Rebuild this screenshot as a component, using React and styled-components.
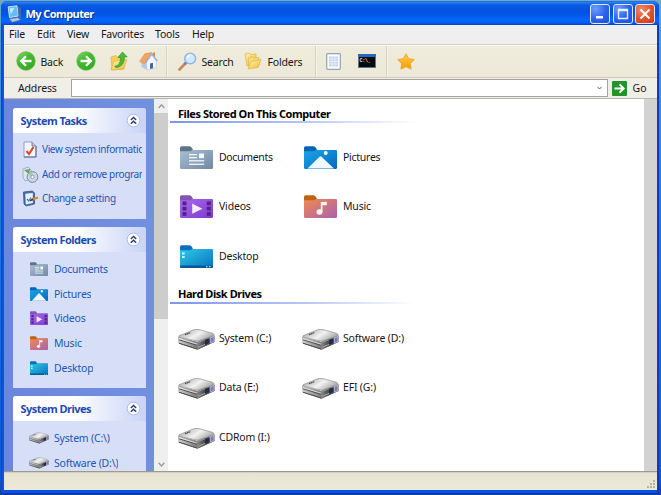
import React from 'react';
import styled, { createGlobalStyle } from 'styled-components';

const Global = createGlobalStyle`
  * { box-sizing: border-box; }
  html, body { margin: 0; height: 100%; overflow: hidden; }
  body { font-family: "Noto Sans", "Open Sans", sans-serif; font-size: 10.5px; color: #161616; }
  svg { display: block; flex: none; }
`;

const Desktop = styled.div`
  width: 661px;
  height: 495px;
  padding: 1px 1px 0;
  background: linear-gradient(#6fa9c4 0, #4b9bd3 40px, #1f7fd8 200px, #0a5bd0 480px, #1b3f9a);
  overflow: hidden;
`;
const Window = styled.div`
  width: 658px;
  height: 493px;
  padding: 0 2px 3px 3px;
  display: flex;
  flex-direction: column;
  border-radius: 6px 6px 0 0;
  background: linear-gradient(90deg, #0a3fcf 0, #0c56ec 2px, #0a50e6 3px, #0a50e6 655px, #0b45d6 656px, #0634b4);
  border-bottom: 1px solid #0434b4;
`;
const TitleBar = styled.div`
  height: 24px;
  flex: none;
  margin: 0 -2px 0 -3px;
  padding: 1px 4px 0 6px;
  display: flex;
  align-items: center;
  border-radius: 6px 6px 0 0;
  background: linear-gradient(#1b62d0 0, #2d82f4 1px, #0c5be2 4px, #0353e0 9px, #0456e6 14px, #0565fb 18px, #0464fa 21px, #0343c4 24px);
`;
const Title = styled.div`
  flex: 1;
  margin-left: 3.5px;
  color: #fff;
  font-weight: 700;
  font-size: 11px;
  letter-spacing: -0.58px;
  text-shadow: 1px 1px 1px #0b2f86;
`;
const Caption = styled.button`
  width: 20px;
  height: 20px;
  margin-left: 2.4px;
  padding: 0;
  display: grid;
  place-items: center;
  border: 1px solid #dfe9fd;
  border-radius: 3px;
  background: ${p => p.$close
    ? 'radial-gradient(circle at 30% 25%, #f08a65, #e2502c 55%, #c83a14)'
    : 'radial-gradient(circle at 25% 20%, #6e9cf8, #2c62ea 55%, #1d50dc)'};
`;
const MenuBar = styled.div`
  height: 19px;
  flex: none;
  display: flex;
  align-items: center;
  padding: 0 0 1px 5px;
  background: #efefef;
`;
const MenuItem = styled.div`
  width: ${p => p.$w}px;
  letter-spacing: -0.2px;
  white-space: nowrap;
`;
const ToolBar = styled.div`
  height: 34px;
  flex: none;
  display: flex;
  align-items: center;
  padding-left: 11.5px;
  border-top: 1px solid #d2d0c4;
  border-bottom: 1px solid #cfccbc;
  box-shadow: inset 0 1px #fbfaf4;
  background: linear-gradient(#efecdd, #ece9d8);
`;
const Tool = styled.div`
  width: ${p => p.$w}px;
  flex: none;
  display: flex;
  align-items: center;
  gap: ${p => p.$gap || 5}px;
  letter-spacing: -0.2px;
  white-space: nowrap;
`;
const Label = styled.span`
  padding-top: 1px;
`;
const Divider = styled.div`
  width: 2px;
  height: 31px;
  margin-right: ${p => p.$after}px;
  background: linear-gradient(90deg, #d6d3c4 50%, #f5f3e8 50%);
`;
const AddressBar = styled.div`
  height: 20px;
  flex: none;
  display: flex;
  align-items: center;
  padding-left: 14px;
  background: #efeee9;
`;
const AddressLabel = styled.div`
  width: 53px;
  padding-bottom: 1px;
  letter-spacing: -0.15px;
`;
const AddressInput = styled.div`
  width: 537px;
  height: 18px;
  padding-right: 5px;
  display: flex;
  align-items: center;
  justify-content: flex-end;
  border: 1px solid #a3a3a0;
  background: #fff;
`;
const GoButton = styled.div`
  display: flex;
  align-items: center;
  gap: 5.5px;
  margin-left: 4px;
`;
const Content = styled.div`
  flex: 1;
  min-height: 0;
  display: flex;
  border-top: 1px solid #b6b5b0;
  background: #fff;
`;
const Sidebar = styled.div`
  width: 150px;
  flex: none;
  overflow: hidden;
  padding: 9px 8.5px 0 8.5px;
  background: linear-gradient(90deg, #6b86dc, #7290e0);
`;
const Panel = styled.section`
  height: ${p => p.$h}px;
  margin-bottom: 8px;
  border-radius: 3px 3px 0 0;
  background: #d6dff7;
  overflow: hidden;
`;
const PanelHead = styled.div`
  height: 25px;
  padding: 0 5px 0 8px;
  display: flex;
  align-items: center;
  justify-content: space-between;
  background: linear-gradient(90deg, #fff 45%, #c8d4f7);
  color: #1b4bb0;
  font-size: 11px;
  font-weight: 700;
  letter-spacing: -0.54px;
  white-space: nowrap;
`;
const PanelList = styled.div`
  padding: ${p => p.$top}px 4px 0 ${p => p.$indent}px;
`;
const PanelRow = styled.div`
  height: 24.75px;
  display: flex;
  align-items: center;
  color: #2355b5;
`;
const IconCell = styled.div`
  width: ${p => p.$w}px;
  padding: ${p => p.$drop || 0}px 0 0 ${p => p.$pad || 0}px;
  flex: none;
`;
const PanelText = styled.div`
  overflow: hidden;
  white-space: nowrap;
  letter-spacing: ${p => p.$ls || -0.2}px;
`;
const TaskText = styled(PanelText)`
  font-size: 10px;
  letter-spacing: -0.36px;
  padding-bottom: 1px;
`;
const Scroll = styled.div`
  width: 14px;
  flex: none;
  display: flex;
  flex-direction: column;
  align-items: center;
  background: #efefef;
`;
const ScrollArrow = styled.div`
  height: 14px;
  display: grid;
  place-items: center;
`;
const Thumb = styled.div`
  width: 100%;
  height: 206px;
  margin-bottom: auto;
  background: #cdcdcd;
`;
const Main = styled.main`
  flex: 1;
  min-width: 0;
  padding-left: 2px;
`;
const Heading = styled.h2`
  height: ${p => p.$h}px;
  width: 246px;
  margin: 0;
  padding: 0 0 ${p => p.$pb}px 8px;
  display: flex;
  align-items: flex-end;
  line-height: 15px;
  font-size: 11px;
  letter-spacing: -0.44px;
  color: #000;
  border-bottom: 2px solid;
  border-image: linear-gradient(90deg, #7b95ee, #b9c6f6 55%, #fff) 1;
`;
const Grid = styled.div`
  display: grid;
  grid-template-columns: 124px 124px;
  grid-auto-rows: 49.5px;
  padding: ${p => p.$top}px 0 0 8px;
`;
const Item = styled.div`
  display: flex;
  align-items: center;
  white-space: nowrap;
  letter-spacing: ${p => p.$ls || -0.18}px;
`;
const Gutter = styled.div`
  width: 13px;
  flex: none;
  background: #d2d2d2;
`;
const StatusBar = styled.div`
  height: 19px;
  flex: none;
  display: flex;
  justify-content: flex-end;
  align-items: flex-end;
  padding: 0 1px 1px 0;
  border-top: 1px solid #9c9a8c;
  box-shadow: inset 0 1px #d5d2c2;
  background: linear-gradient(#e6e3d2, #ece9d8);
`;

const Defs = () => (
  <svg width="0" height="0">
    <defs>
      <linearGradient id="g-doc" x2="1" y2="1"><stop stopColor="#a9bfd4" /><stop offset="1" stopColor="#7088a3" /></linearGradient>
      <linearGradient id="g-pic" x2="1" y2="1"><stop stopColor="#19a7e8" /><stop offset="1" stopColor="#0667bd" /></linearGradient>
      <linearGradient id="g-vid" x2="1" y2="1"><stop stopColor="#a968ec" /><stop offset="1" stopColor="#7d3bd0" /></linearGradient>
      <linearGradient id="g-mus" x2="1" y2="1"><stop stopColor="#f08b50" /><stop offset="1" stopColor="#a95fb0" /></linearGradient>
      <linearGradient id="g-desk" x2="1" y2="1"><stop stopColor="#30cbe6" /><stop offset="1" stopColor="#0672c0" /></linearGradient>
      <linearGradient id="g-top" x2="1" y2=".5"><stop stopColor="#9c9c9c" /><stop offset=".3" stopColor="#c6c6c6" /><stop offset=".6" stopColor="#f2f2f2" /><stop offset="1" stopColor="#a8a8a8" /></linearGradient>
      <linearGradient id="g-side" x2="1"><stop stopColor="#d0d0d0" /><stop offset="1" stopColor="#7c7c7c" /></linearGradient>
      <linearGradient id="g-front" x2="1"><stop stopColor="#8a8a8a" /><stop offset=".4" stopColor="#4e4e4e" /><stop offset="1" stopColor="#666678" /></linearGradient>
      <linearGradient id="g-yel" x2="1" y2="1"><stop stopColor="#fff4b0" /><stop offset="1" stopColor="#eebb35" /></linearGradient>
      <linearGradient id="g-star" x2="0" y2="1"><stop stopColor="#ffd04a" /><stop offset="1" stopColor="#f99a0e" /></linearGradient>
      <linearGradient id="g-green" x2=".6" y2="1"><stop stopColor="#8bdb70" /><stop offset=".45" stopColor="#44b930" /><stop offset="1" stopColor="#35aa24" /></linearGradient>
    </defs>
  </svg>
);

const tabs = { doc: '#5f7687', pic: '#0764b3', vid: '#8255b5', mus: '#bd6314', desk: '#0870bf' };

const Folder = ({ kind, w = 33, h = 23 }) => (
  <svg width={w} height={h} viewBox="0 0 33 23" preserveAspectRatio="none">
    <path d="M0 2Q0 .3 1.5.3H9.5Q11 .3 12 2L13 4H31.5Q33 4 33 5.5V12H0Z" fill={tabs[kind]} />
    <path d="M0 5.2H9.5Q11 5.2 12.3 4H31.6Q33 4 33 5.5V21.7Q33 23 31.6 23H1.4Q0 23 0 21.7Z" fill={`url(#g-${kind})`} />
    {kind === 'doc' && <g fill="#f5f9fc">
      <rect x="9" y="8" width="8" height="1.3" /><rect x="9" y="11" width="8" height="1.3" />
      <rect x="19" y="7.5" width="5" height="4.7" /><rect x="9" y="14.2" width="15.2" height="1.3" /><rect x="9" y="17.6" width="15.2" height="1.3" />
    </g>}
    {kind === 'pic' && <g fill="#eefaff"><path d="M3.5 22.5L15.5 10.7Q16.5 9.8 17.5 10.7L30 22.5Z" /><circle cx="21.7" cy="7" r="2" /></g>}
    {kind === 'vid' && <g>
      <g fill="#4b2484">
        {[6.5, 11.8, 17.1].map(y => <React.Fragment key={y}><rect x="2.5" y={y} width="4" height="3.7" /><rect x="26.8" y={y} width="4" height="3.7" /></React.Fragment>)}
      </g>
      <path d="M12.2 8.5L22.3 13.7L12.2 18.8Z" fill="#f4edff" />
    </g>}
    {kind === 'mus' && <g fill="#fff4ee"><ellipse cx="15.5" cy="17" rx="3" ry="2.7" /><path d="M16.8 7L22.8 6.8V10.3H18.5V17H16.8Z" /></g>}
    {kind === 'desk' && <g>
      <path d="M0 20.5H33V21.7Q33 23 31.6 23H1.4Q0 23 0 21.7Z" fill="#075893" />
      <g fill="#d8fbff"><rect x="2" y="7.5" width="2.6" height="2" /><rect x="2" y="11" width="2.6" height="2" /><rect x="26" y="21.2" width="1.5" height="1" /><rect x="29" y="21.2" width="1.5" height="1" /></g>
    </g>}
  </svg>
);

const Drive = ({ w = 37, h = 21 }) => (
  <svg width={w} height={h} viewBox="0 0 37 21">
    <path d="M.5 8L19 13L36.5 6.5V13L19.5 20.8L.8 14.6Z" fill="#555" />
    <path d="M.8 8L19 13V20L1 14Z" fill="url(#g-side)" />
    <path d="M1 10.8L19 16.2" stroke="#505050" strokeWidth="1.1" />
    <path d="M1 9.7L19 15.1" stroke="#ececec" strokeWidth=".8" />
    <path d="M1 14.2L19 20" stroke="#505050" strokeWidth="1" />
    <path d="M19 13L36.4 6.5V13L19 20.4Z" fill="url(#g-front)" />
    <path d="M20 13.4L35 7.8" stroke="#b0b0b0" strokeWidth=".7" />
    <path d="M20.5 18.2L28 15" stroke="#a9a9a9" strokeWidth="1" />
    <path d="M1 6.8L15 1Q18 -.1 21 .6L34.5 4.3Q36.8 5.3 35.5 6.8L19.5 12.2L2 8.4Q0 7.8 1 6.8Z" fill="url(#g-top)" stroke="#858585" strokeWidth=".6" />
    <path d="M7 5.6L12.5 3.7" stroke="#444" strokeWidth="1.2" strokeDasharray="1.6 .4" />
    <path d="M27 10.8L31.5 9.2V14L27 16Z" fill="#222c45" />
    <path d="M32.3 8.8L36 7.4V12.4L32.3 14.2Z" fill="#7f78b4" stroke="#cfcce8" strokeWidth=".7" />
  </svg>
);

const RoundArrow = ({ forward }) => (
  <svg width="20" height="20" viewBox="0 0 20 20">
    <circle cx="10" cy="10" r="9.2" fill="url(#g-green)" stroke="#5cb84a" strokeWidth=".8" />
    <path d={forward ? 'M4.5 10H14.5M10 5.2L14.8 10L10 14.8' : 'M15.5 10H5.5M10 5.2L5.2 10L10 14.8'} fill="none" stroke="#fff" strokeWidth="2.3" />
  </svg>
);
const UpFolder = () => (
  <svg width="18" height="20" viewBox="0 0 18 20">
    <path d="M1 6L6 4.5L8 6.5L14 6V18L2 19Z" fill="#f3cf5b" stroke="#d8aa38" strokeWidth=".6" />
    <path d="M1 19L4 10L17 8.5L13.5 18Z" fill="url(#g-yel)" stroke="#d8aa38" strokeWidth=".6" />
    <path d="M4.5 15.5Q11 14 10.5 6.5H7.8L12.5 1L17.2 6H14.3Q15 14 7 16.8Z" fill="#4eb936" stroke="#278c1c" strokeWidth=".6" />
  </svg>
);
const Home = () => (
  <svg width="19" height="20" viewBox="0 0 19 20">
    <path d="M2.5 10L8 13V19L2.5 16Z" fill="#b3c9ea" />
    <path d="M7.5 11L13 4L17.3 10V16.5L8 19.2Z" fill="#f6f9ff" stroke="#a9b7cf" strokeWidth=".5" />
    <path d="M.6 10.5L5.8 2.8L12.5 1.5L7.3 10L5.8 12.8Z" fill="#f3a55c" stroke="#d98239" strokeWidth=".5" />
    <path d="M6.4 12.2L12.8 2.6L18.3 10" fill="none" stroke="#8fb0e4" strokeWidth="1.3" />
    <rect x="13.8" y="1.5" width="2.2" height="4" fill="#dd8a55" />
    <path d="M11 12.4L14 11.7V17.3L11 18.1Z" fill="#3e66a8" />
  </svg>
);
const Search = () => (
  <svg width="19" height="19" viewBox="0 0 19 19">
    <path d="M1.5 17.5L8 10.7" stroke="#c98a58" strokeWidth="2.7" strokeLinecap="round" />
    <path d="M6.4 12.4L8.5 10.2" stroke="#7283a2" strokeWidth="2.5" />
    <circle cx="12.2" cy="6.5" r="5.4" fill="#cdeafe" stroke="#8fb2e2" strokeWidth="1.4" />
    <path d="M9.2 6Q10 3.5 12.5 3.3" stroke="#fff" strokeWidth="1.5" fill="none" />
  </svg>
);
const OpenFolders = () => (
  <svg width="18" height="18" viewBox="0 0 18 18">
    <path d="M1 2L5 1L7 2.5L12 2V11L3 14Z" fill="url(#g-yel)" stroke="#dfb548" strokeWidth=".7" />
    <path d="M4 6L8 4.5L10 6L15 5.5V14L5 16Z" fill="#f7da74" stroke="#dfb548" strokeWidth=".7" />
    <path d="M4 16.8L7 9.5L17 7.5L14 15.5Z" fill="url(#g-yel)" stroke="#dfb548" strokeWidth=".7" />
  </svg>
);
const ListDoc = () => (
  <svg width="15" height="17" viewBox="0 0 15 17">
    <rect x=".7" y=".7" width="13.6" height="15.6" rx=".7" fill="#f8fbff" stroke="#93a5ba" strokeWidth="1.2" />
    <path d="M3 3.5H12V13.5H3Z" fill="#c6d5e6" />
    <path d="M3 6H12M3 8.5H12M3 11H12M6 3.5V13.5M9 3.5V13.5" stroke="#eff5fb" strokeWidth=".7" />
  </svg>
);
const Prompt = styled.div`
  width: 18px;
  height: 14px;
  border: 1px solid #56779c;
  border-top: 3px solid #2a67bd;
  background: #080a0d;
  color: #e4e4e4;
  font: 700 5px/8px "Liberation Mono", monospace;
  letter-spacing: -0.3px;
  padding-left: 1px;
  overflow: hidden;
`;
const Star = () => (
  <svg width="18" height="17" viewBox="0 0 18 17">
    <path d="M9 .8L11.6 5.7L17.2 6.6L13.3 10.6L14.1 16.1L9 13.7L3.9 16.1L4.7 10.6L.8 6.6L6.4 5.7Z" fill="url(#g-star)" stroke="#f9a61d" strokeLinejoin="round" />
  </svg>
);
const Computer = () => (
  <svg width="15" height="18" viewBox="0 0 15 18">
    <path d="M1.2 1.8L10 .8L11.3 11L2.5 12.5Z" fill="#62bdf2" stroke="#c9def2" strokeWidth="1" />
    <path d="M10.8 1.5L13.8 3V14L11.6 12Z" fill="#54699c" />
    <path d="M2.5 14L11 12.5L13.5 15L5 17.2Z" fill="#b9c6df" stroke="#5f75a5" strokeWidth=".6" />
    <path d="M2.6 3.4L7.5 2.7L3.8 9.5Z" fill="#bdebff" />
  </svg>
);
const Collapse = () => (
  <svg width="15" height="15" viewBox="0 0 15 15">
    <circle cx="7.5" cy="7.5" r="6.4" fill="#fff" stroke="#b0b9dd" strokeWidth="1" />
    <path d="M4.8 7L7.5 4.4L10.2 7M4.8 10.8L7.5 8.2L10.2 10.8" fill="none" stroke="#24387c" strokeWidth="1.4" />
  </svg>
);
const TaskInfo = () => (
  <svg width="17" height="17" viewBox="0 0 17 17">
    <path d="M2 1H10L14 5V16H2Z" fill="#f2f6fd" stroke="#8fa0c2" />
    <path d="M14 5V16H2" fill="none" stroke="#5b6c93" />
    <path d="M10 1V5H14" fill="#b9c9e3" stroke="#7185aa" />
    <path d="M4.5 10L7 13L11.5 6" fill="none" stroke="#e0492c" strokeWidth="2.2" />
  </svg>
);
const TaskPrograms = () => (
  <svg width="17" height="17" viewBox="0 0 17 17">
    <path d="M1 3L6 1L9 4V13L3 15L1 11Z" fill="#dde6ed" stroke="#91a2b5" strokeWidth=".8" />
    <path d="M2 4L7 8L8 3" fill="#60a65a" />
    <circle cx="10.5" cy="11" r="5.4" fill="#c8d4e8" stroke="#7d8db0" />
    <path d="M10.5 11L6 8.3Q8 5.8 10.5 5.9Z" fill="#9ccf9d" />
    <circle cx="10.5" cy="11" r="1.6" fill="#fff" stroke="#7484a3" strokeWidth=".7" />
  </svg>
);
const TaskSetting = () => (
  <svg width="17" height="17" viewBox="0 0 17 17">
    <path d="M1.5 2L10.5 1L12.5 3V14L4 16L2 14Z" fill="#4a6ea6" stroke="#2c4a7c" strokeWidth=".7" />
    <path d="M3.3 3.8L10.8 2.9V13L3.8 14.4Z" fill="#e8f3fd" />
    <path d="M5 9L6.7 11L9 7.5" fill="none" stroke="#397cc5" strokeWidth="1.2" />
    <path d="M9.5 9.8L16 7.5" stroke="#d28b36" strokeWidth="2.2" /><path d="M8 10.8L11 9.3" stroke="#403b37" strokeWidth="1.8" />
  </svg>
);
const Chevron = ({ down, small }) => (
  <svg width={small ? 5 : 7} height={small ? 4 : 5} viewBox="0 0 7 5">
    <path d={down ? 'M.6 .8L3.5 4L6.4 .8' : 'M.6 4L3.5 .8L6.4 4'} fill="none" stroke={small ? '#555' : '#999'} strokeWidth="1.3" />
  </svg>
);
const GoIcon = () => (
  <svg width="15" height="15" viewBox="0 0 15 15">
    <rect width="15" height="15" rx="1" fill="#25932a" />
    <path d="M2.5 7.5H11.5M7.5 3.3L11.8 7.5L7.5 11.7" fill="none" stroke="#fff" strokeWidth="1.8" />
  </svg>
);
const Grip = () => (
  <svg width="10" height="10" viewBox="0 0 10 10" fill="#b5b29f">
    {[[7, 1], [4, 4], [7, 4], [1, 7], [4, 7], [7, 7]].map(([x, y]) => <rect key={`${x}-${y}`} x={x} y={y} width="2" height="2" />)}
  </svg>
);

const folders = [['Documents', 'doc', -0.33], ['Pictures', 'pic', -0.27], ['Videos', 'vid'], ['Music', 'mus'], ['Desktop', 'desk']];
const drives = ['System (C:)', 'Software (D:)', 'Data (E:)', 'EFI (G:)', 'CDRom (I:)'];
const tasks = [['View system information', TaskInfo], ['Add or remove programs', TaskPrograms], ['Change a setting', TaskSetting]];
const menus = [['File', 28], ['Edit', 30], ['View', 34], ['Favorites', 54], ['Tools', 37], ['Help', 30]];

const SidePanel = ({ title, height, indent, top = 4.5, children }) => (
  <Panel $h={height}>
    <PanelHead>{title}<Collapse /></PanelHead>
    <PanelList $indent={indent} $top={top}>{children}</PanelList>
  </Panel>
);

export default function App() {
  return (
    <Desktop>
      <Global />
      <Window>
        <TitleBar>
          <Computer />
          <Title>My Computer</Title>
          <Caption aria-label="Minimize"><svg width="12" height="12"><rect x="2" y="8" width="7" height="2.5" fill="#fff" /></svg></Caption>
          <Caption aria-label="Maximize"><svg width="12" height="12"><path d="M1.5 1.5H10.5V10.5H1.5ZM1.5 2.5H10.5" fill="none" stroke="#e8f0ff" strokeWidth="1.3" /></svg></Caption>
          <Caption $close aria-label="Close"><svg width="12" height="12"><path d="M1.5 1.5L10.5 10.5M10.5 1.5L1.5 10.5" stroke="#fff" strokeWidth="2" /></svg></Caption>
        </TitleBar>
        <MenuBar>{menus.map(([m, w]) => <MenuItem key={m} $w={w}>{m}</MenuItem>)}</MenuBar>
        <ToolBar>
          <Tool $w={60}><RoundArrow /><Label>Back</Label></Tool>
          <Tool $w={34}><RoundArrow forward /></Tool>
          <Tool $w={29}><UpFolder /></Tool>
          <Tool $w={27.5}><Home /></Tool>
          <Divider $after={9.5} />
          <Tool $w={66} $gap={5}><Search /><Label>Search</Label></Tool>
          <Tool $w={71} $gap={6}><OpenFolders /><Label>Folders</Label></Tool>
          <Divider $after={9.5} />
          <Tool $w={31.5}><ListDoc /></Tool>
          <Tool $w={28.5}><Prompt>C:\_</Prompt></Tool>
          <Divider $after={8.5} />
          <Star />
        </ToolBar>
        <AddressBar>
          <AddressLabel>Address</AddressLabel>
          <AddressInput><Chevron down small /></AddressInput>
          <GoButton><GoIcon />Go</GoButton>
        </AddressBar>
        <Content>
          <Sidebar>
            <SidePanel title="System Tasks" height={111} indent={9.5} top={4}>
              {tasks.map(([t, Icon]) => <PanelRow key={t}><IconCell $w={20}><Icon /></IconCell><TaskText>{t}</TaskText></PanelRow>)}
            </SidePanel>
            <SidePanel title="System Folders" height={161} indent={17.5}>
              {folders.map(([t, k, ls]) => <PanelRow key={t}><IconCell $w={24}><Folder kind={k} w={18} h={14} /></IconCell><PanelText $ls={ls}>{t}</PanelText></PanelRow>)}
            </SidePanel>
            <SidePanel title="System Drives" height={161} indent={16.5}>
              {['System (C:\\)', 'Software (D:\\)'].map(t => <PanelRow key={t}><IconCell $w={25}><Drive w={20} h={12} /></IconCell><PanelText>{t}</PanelText></PanelRow>)}
            </SidePanel>
          </Sidebar>
          <Scroll>
            <ScrollArrow><Chevron /></ScrollArrow>
            <Thumb />
            <ScrollArrow><Chevron down /></ScrollArrow>
          </Scroll>
          <Main>
            <Heading $h={24} $pb={0}>Files Stored On This Computer</Heading>
            <Grid $top={9}>
              {folders.map(([t, k, ls]) => <Item key={t} $ls={ls}><IconCell $w={41} $pad={2} $drop={1}><Folder kind={k} /></IconCell>{t}</Item>)}
            </Grid>
            <Heading $h={23.5} $pb={1}>Hard Disk Drives</Heading>
            <Grid $top={9}>
              {drives.map(t => <Item key={t}><IconCell $w={41} $drop={3}><Drive /></IconCell>{t}</Item>)}
            </Grid>
          </Main>
          <Gutter />
        </Content>
        <StatusBar><Grip /></StatusBar>
      </Window>
      <Defs />
    </Desktop>
  );
}
